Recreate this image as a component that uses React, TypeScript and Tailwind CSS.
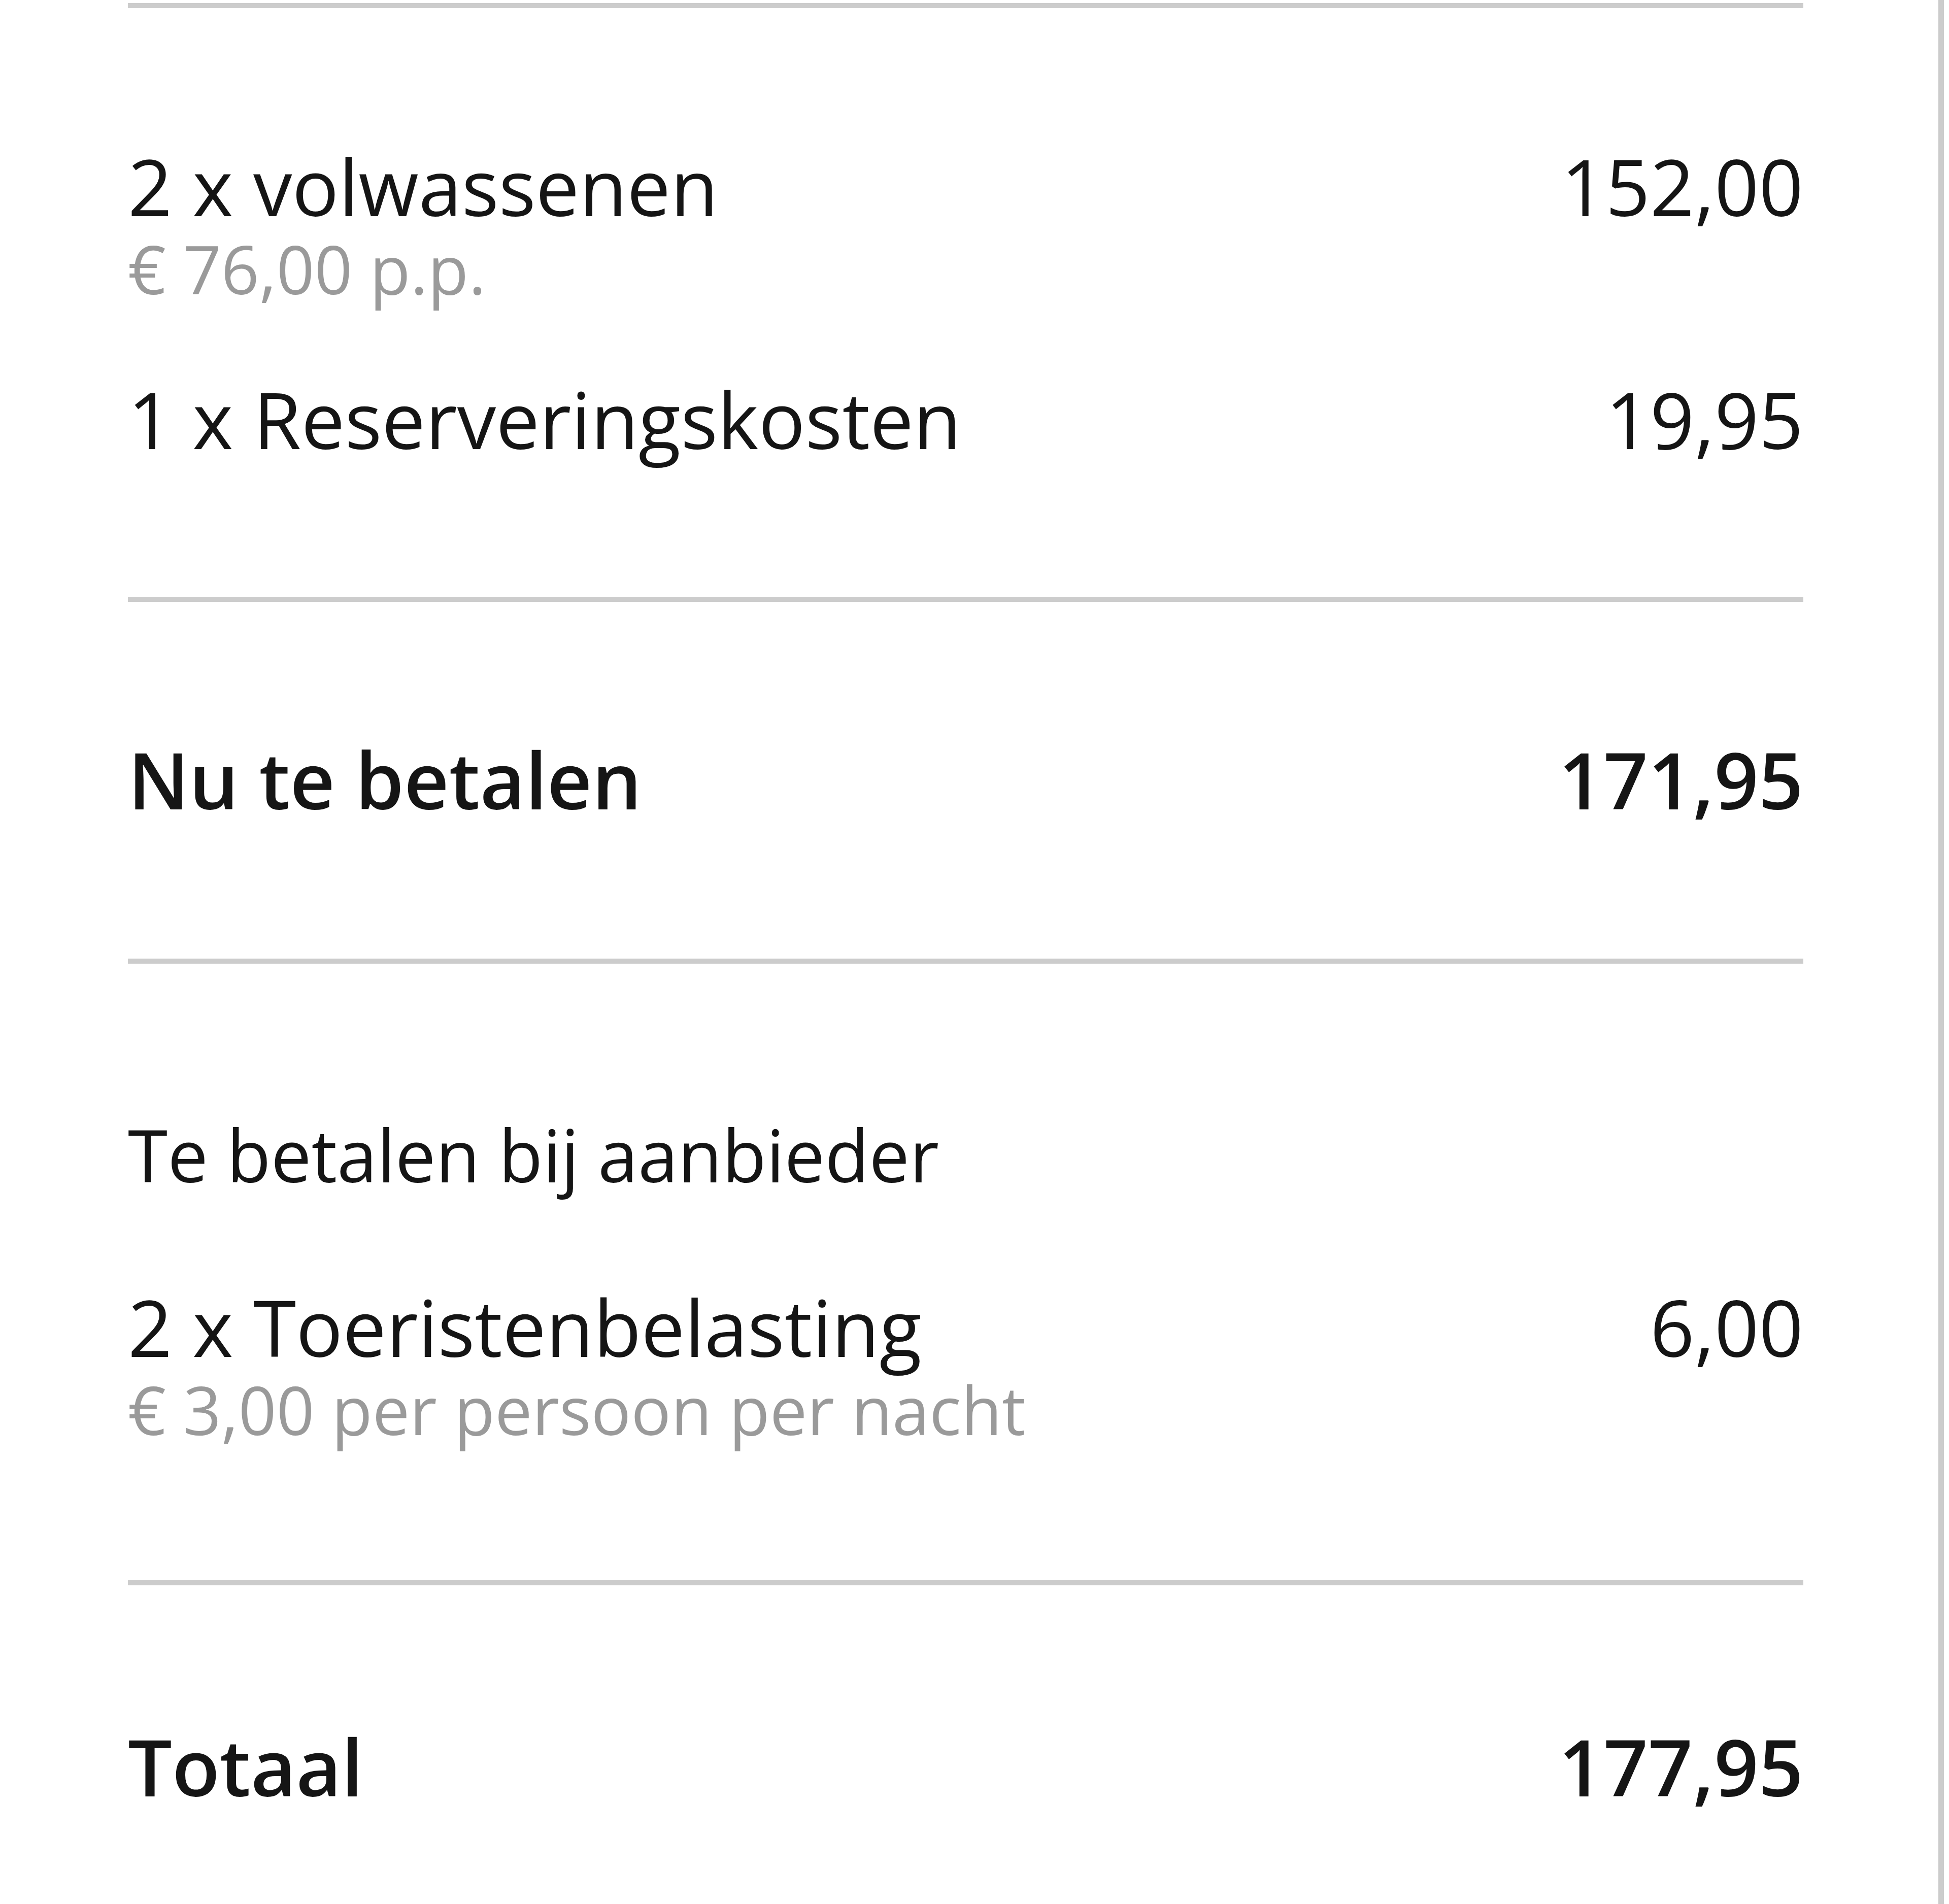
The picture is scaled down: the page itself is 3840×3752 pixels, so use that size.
type Line = {
  label: string;
  amount?: string;
  sub?: string;
};

const firstLines: Line[] = [
  { label: "2 x volwassenen", amount: "152,00", sub: "€ 76,00 p.p." },
  { label: "1 x Reserveringskosten", amount: "19,95" },
];

function PriceLine({ line }: { line: Line }) {
  return (
    <div className="flex items-start justify-between">
      <div className="flex flex-col">
        <span className="text-[153px] leading-[184px]">{line.label}</span>
        {line.sub && (
          <span className="text-[131px] leading-[140px] text-[#9a9a9a]">{line.sub}</span>
        )}
      </div>
      {line.amount && <span className="text-[153px] leading-[184px]">{line.amount}</span>}
    </div>
  );
}

function TotalLine({ label, amount }: { label: string; amount: string }) {
  return (
    <div className="flex items-start justify-between font-semibold">
      <span className="text-[154px] leading-[184px]">{label}</span>
      <span className="text-[154px] leading-[184px]">{amount}</span>
    </div>
  );
}

export default function App() {
  return (
    <div className="min-h-screen bg-white">
      <div className="w-[3830px] min-h-[3760px] border-r-[11px] border-[#cccccc] rounded-br-[20px] pl-[252px] pr-[266px] pt-[6px] font-['Open_Sans',sans-serif] text-[#151515]">
        <section className="border-t-[10px] border-[#cccccc] pt-[259px] pb-[258px] flex flex-col gap-[135px]">
          {firstLines.map((line) => (
            <PriceLine key={line.label} line={line} />
          ))}
        </section>

        <section className="border-t-[10px] border-[#cccccc] pt-[257px] pb-[262px]">
          <TotalLine label="Nu te betalen" amount="171,95" />
        </section>

        <section className="border-t-[10px] border-[#cccccc] pt-[284px] pb-[267px] flex flex-col gap-[156px]">
          <div className="text-[142px] leading-[184px]">Te betalen bij aanbieder</div>
          <PriceLine
            line={{
              label: "2 x Toeristenbelasting",
              amount: "6,00",
              sub: "€ 3,00 per persoon per nacht",
            }}
          />
        </section>

        <section className="border-t-[10px] border-[#cccccc] pt-[264px] pb-[200px]">
          <TotalLine label="Totaal" amount="177,95" />
        </section>
      </div>
    </div>
  );
}
